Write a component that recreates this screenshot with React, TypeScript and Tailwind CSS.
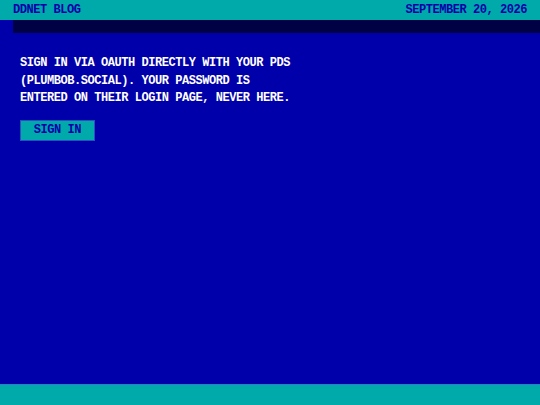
import React from 'react';

const FONT = { fontFamily: '"Liberation Mono", "DejaVu Sans Mono", monospace' };

export default function App() {
    return (
        <div className="w-[540px] h-[405px] flex flex-col bg-[#0000aa] overflow-hidden font-bold uppercase" style={FONT}>
            {/* Top bar */}
            <header className="h-[20px] shrink-0 bg-[#00aaaa] px-[13px] flex items-center justify-between text-[12px] tracking-[-0.45px] leading-none text-[#0000aa]">
                <span>DDNET BLOG</span>
                <span>September 20, 2026</span>
            </header>

            {/* Shadow strip */}
            <div className="h-[13px] shrink-0 pl-[13px]">
                <div className="h-full bg-[#000044]" />
            </div>

            {/* Content */}
            <main className="flex-1 px-[20px] pt-[22px]">
                <p className="text-[12px] tracking-[-0.45px] leading-[17.5px] text-white">
                    Sign in via OAuth directly with your PDS<br />
                    (plumbob.social). Your password is<br />
                    entered on their login page, never here.
                </p>
                <button className="mt-[12px] w-[75px] h-[21px] bg-[#00aaaa] border border-[#2a4fc0] text-[12px] tracking-[-0.45px] leading-none text-[#0000aa] uppercase font-bold flex items-center justify-center">
                    Sign In
                </button>
            </main>

            {/* Bottom bar */}
            <footer className="h-[21px] shrink-0 bg-[#00aaaa] border-t border-[#2b7fd0]" />
        </div>
    );
}
